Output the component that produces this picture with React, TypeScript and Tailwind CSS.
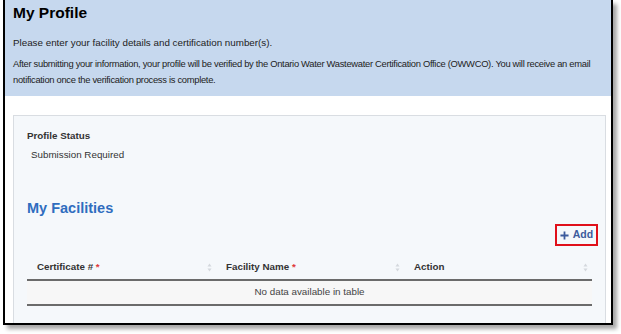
export default function App() {
  return (
    <div className="h-[334px] w-[621px] bg-white font-['Liberation_Sans',Arial,sans-serif]">
      <div className="ml-[3px] flex h-[325px] w-[610px] flex-col overflow-hidden border-2 border-t-0 border-black bg-white shadow-[4px_4px_4px_rgba(0,0,0,0.35)]">
        <div className="h-[96px] shrink-0 bg-[#c6d8ee] pl-[8px] pr-[4px]">
          <h1 className="pt-[3px] text-[15.5px] font-bold leading-[20px] text-black">My Profile</h1>
          <p className="mt-[13px] text-[9.8px] leading-[14px] text-[#222]">
            Please enter your facility details and certification number(s).
          </p>
          <p className="mt-[6px] whitespace-nowrap text-[9.4px] leading-[16px] tracking-[-0.3px] text-[#222]">
            After submitting your information, your profile will be verified by the Ontario Water Wastewater Certification
            Office (OWWCO). You will receive an email
            <br />
            notification once the verification process is complete.
          </p>
        </div>

        <div className="flex-1 px-[8px] pt-[19px]">
          <div className="h-[260px] w-[593px] border border-[#d9dde2] bg-[#f5f8fb] px-[13px] pt-[12px]">
            <p className="text-[9.8px] font-bold leading-[16px] text-[#333]">Profile Status</p>
            <p className="ml-[4px] mt-[3px] text-[9.8px] leading-[16px] text-[#333]">Submission Required</p>

            <h2 className="mt-[35px] text-[14.5px] font-bold leading-[20px] text-[#2f6dbf]">My Facilities</h2>

            <div className="-mr-[6px] mt-[6px] flex justify-end">
              <button
                type="button"
                className="flex h-[22px] w-[43px] items-center justify-center gap-[4px] border-2 border-[#e0101a] text-[10.5px] font-bold text-[#3c5b9d]"
              >
                <svg className="h-[9px] w-[9px]" viewBox="0 0 10 10" fill="none">
                  <path d="M5 0.5v9M0.5 5h9" stroke="currentColor" strokeWidth="2" />
                </svg>
                Add
              </button>
            </div>

            <div className="mt-[10px] w-[565px]">
              <div className="flex h-[25px] items-center border-b-2 border-[#6b6b6b] text-[9.8px] font-bold text-[#333]">
                <div className="flex w-[189px] items-center justify-between pl-[10px] pr-[4px]">
                  <span>
                    Certificate # <span className="text-[#e03a3a]">*</span>
                  </span>
                  <SortIcon />
                </div>
                <div className="flex w-[188px] items-center justify-between pl-[10px] pr-[4px]">
                  <span>
                    Facility Name <span className="text-[#e03a3a]">*</span>
                  </span>
                  <SortIcon />
                </div>
                <div className="flex flex-1 items-center justify-between pl-[10px] pr-[4px]">
                  <span>Action</span>
                  <SortIcon />
                </div>
              </div>
              <div className="flex h-[25px] items-center justify-center border-b-2 border-[#6b6b6b] bg-[#f7f7f7] text-[9.8px] text-[#444]">
                No data available in table
              </div>
            </div>
          </div>
        </div>
      </div>
    </div>
  )
}

function SortIcon() {
  return (
    <svg className="h-[9px] w-[5px]" viewBox="0 0 5 9">
      <path d="M2.5 0.5L4.5 3.5H0.5Z" fill="#d4d8dd" />
      <path d="M2.5 8.5L4.5 5.5H0.5Z" fill="#d4d8dd" />
    </svg>
  )
}
